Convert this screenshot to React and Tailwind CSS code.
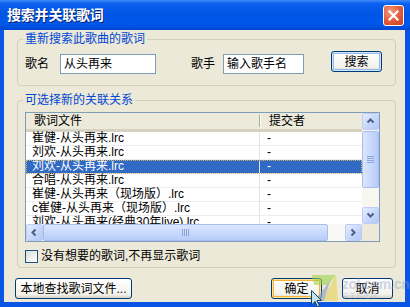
import React from "react";

const rows = [
  "崔健-从头再来.lrc",
  "刘欢-从头再来.lrc",
  "刘欢-从头再来.lrc",
  "合唱-从头再来.lrc",
  "崔健-从头再来（现场版）.lrc",
  "c崔健-从头再来（现场版）.lrc",
  "刘欢-从头再来(经典30年live).lrc",
];

const arrows = {
  up: "M1.5 5.5 L4.5 2.5 L7.5 5.5",
  down: "M1.5 2.5 L4.5 5.5 L7.5 2.5",
  left: "M5.5 1.5 L2.5 4.5 L5.5 7.5",
  right: "M2.5 1.5 L5.5 4.5 L2.5 7.5",
};

function ScrollBtn({ dir }) {
  return (
    <div className="w-[17px] h-[17px] shrink-0 flex items-center justify-center rounded-[2px] border border-[#bccdf5] bg-[linear-gradient(135deg,#e6eefe,#c4d5fb_60%,#b4c8f6)]">
      <svg width="9" height="9" viewBox="0 0 9 9">
        <path d={arrows[dir]} fill="none" stroke="#4d6185" strokeWidth="2" />
      </svg>
    </div>
  );
}

function Grip({ vertical }) {
  return vertical ? (
    <div className="flex flex-col gap-[1px]">
      <div className="w-[7px] h-[1px] bg-[#8ca6dc]" />
      <div className="w-[7px] h-[1px] bg-[#8ca6dc]" />
      <div className="w-[7px] h-[1px] bg-[#8ca6dc]" />
      <div className="w-[7px] h-[1px] bg-[#8ca6dc]" />
    </div>
  ) : (
    <div className="flex gap-[1px]">
      <div className="w-[1px] h-[7px] bg-[#8ca6dc]" />
      <div className="w-[1px] h-[7px] bg-[#8ca6dc]" />
      <div className="w-[1px] h-[7px] bg-[#8ca6dc]" />
      <div className="w-[1px] h-[7px] bg-[#8ca6dc]" />
    </div>
  );
}

function XpButton({ children, ring, className }) {
  return (
    <button
      type="button"
      className={
        "h-[21px] rounded-[3px] border border-[#003c74] bg-[linear-gradient(to_bottom,#ffffff,#f3f2ec_80%,#d8d2c6)] text-[12px] text-black leading-none flex items-center justify-center " +
        (ring === "blue"
          ? "shadow-[inset_0_0_0_1px_#cee7ff,inset_0_0_0_2px_#98b8ea] "
          : ring === "orange"
          ? "shadow-[inset_0_0_0_1px_#ffe49c,inset_0_0_0_2px_#f8b33a] "
          : "") +
        (className || "")
      }
    >
      {children}
    </button>
  );
}

export default function App() {
  return (
    <div className="relative w-[410px] h-[307px] overflow-hidden bg-[#0a55e3] flex flex-col font-['Liberation_Sans','Noto_Sans_CJK_SC',sans-serif] text-[12px] text-black">
      {/* title bar */}
      <div className="h-[30px] shrink-0 flex items-center justify-between pl-[7px] pr-[6px] bg-[linear-gradient(to_bottom,#3d8af7_0%,#0d60ee_12%,#0055e5_45%,#0058ea_80%,#0047d2_100%)]">
        <span className="text-white font-bold text-[14px] leading-none tracking-[-0.2px] [text-shadow:1px_1px_0_#0a1f6b]">
          搜索并关联歌词
        </span>
        <div className="w-[21px] h-[21px] rounded-[3px] border border-white bg-[radial-gradient(circle_at_35%_30%,#f39a7c,#e2583a_55%,#c8401f)] flex items-center justify-center">
          <svg width="11" height="11" viewBox="0 0 11 11">
            <path d="M1.5 1.5 L9.5 9.5 M9.5 1.5 L1.5 9.5" stroke="white" strokeWidth="2.2" strokeLinecap="square" />
          </svg>
        </div>
      </div>

      {/* body */}
      <div className="flex-1 ml-[4px] mr-[5px] mb-[5px] bg-[#ece9d8] pt-[1px] flex flex-col">
        <fieldset className="ml-[13px] w-[379px] border border-[#d0d0bf] rounded-[4px] pb-[11px]">
          <legend className="ml-[5px] px-[2px] text-[#0046d5] text-[12px] leading-[16px]">
            重新搜索此歌曲的歌词
          </legend>
          <div className="flex items-start pl-[7px] pt-[4px]">
            <span className="mt-[3px] leading-[20px]">歌名</span>
            <div className="mt-[3px] ml-[11px] w-[96px] h-[20px] bg-white border border-[#7f9db9] flex items-center pl-[3px]">
              从头再来
            </div>
            <span className="mt-[3px] ml-[35px] leading-[20px]">歌手</span>
            <div className="mt-[3px] ml-[8px] w-[81px] h-[20px] bg-white border border-[#7f9db9] flex items-center pl-[3px]">
              输入歌手名
            </div>
            <XpButton ring="blue" className="ml-[27px] w-[51px]">
              搜索
            </XpButton>
          </div>
        </fieldset>

        <fieldset className="mt-[6px] ml-[13px] w-[379px] border border-[#d0d0bf] rounded-[4px] pb-[4px]">
          <legend className="ml-[5px] px-[2px] text-[#0046d5] text-[12px] leading-[16px]">
            可选择新的关联关系
          </legend>
          {/* list view */}
          <div className="mt-[4px] ml-[7px] w-[355px] h-[130px] border border-[#7f9db9] bg-white grid grid-cols-[336px_17px] grid-rows-[111px_17px]">
            <div className="overflow-hidden">
              <div className="h-[19px] flex items-center bg-[#ebeadb] border-b-[3px] border-[#d6d2c2]">
                <div className="w-[233px] pl-[8px] leading-[16px]">歌词文件</div>
                <div className="w-[2px] h-[12px] border-l border-[#aca899] bg-white" />
                <div className="pl-[8px] leading-[16px]">提交者</div>
              </div>
              {rows.map((r, i) => {
                const sel = i === 2;
                return (
                  <div
                    key={i}
                    className={
                      "h-[14px] flex border-b border-[#ededed] whitespace-nowrap leading-[13px] " +
                      (sel
                        ? "bg-[#316ac5] text-white outline outline-1 outline-dotted outline-[#c9b56f] -outline-offset-1"
                        : "")
                    }
                  >
                    <div className="w-[234px] pl-[6px] border-r border-[#e4e4e4]">{r}</div>
                    <div className="pl-[7px]">-</div>
                  </div>
                );
              })}
            </div>
            {/* vertical scrollbar */}
            <div className="flex flex-col bg-[#f7f6f0]">
              <ScrollBtn dir="up" />
              <div className="mt-[1px] h-[57px] rounded-[2px] border border-[#a7bdf0] bg-[linear-gradient(to_right,#dbe6fe,#c6d7fc_60%,#b7cbf8)] flex items-center justify-center">
                <Grip vertical />
              </div>
              <div className="flex-1" />
              <ScrollBtn dir="down" />
            </div>
            {/* horizontal scrollbar */}
            <div className="flex bg-[#f9f8f4]">
              <ScrollBtn dir="left" />
              <div className="w-[285px] rounded-[2px] border border-[#a7bdf0] bg-[linear-gradient(to_bottom,#dbe6fe,#c6d7fc_60%,#b7cbf8)] flex items-center justify-center">
                <Grip />
              </div>
              <div className="flex-1" />
              <ScrollBtn dir="right" />
            </div>
            <div className="bg-[#ece9d8]" />
          </div>
          <div className="mt-[7px] ml-[7px] flex items-center gap-[3px]">
            <div className="w-[13px] h-[13px] border border-[#1c5180] bg-[linear-gradient(135deg,#dcdcd7,#ffffff)]" />
            <span className="leading-[14px]">没有想要的歌词,不再显示歌词</span>
          </div>
        </fieldset>

        <div className="mt-[10px] flex pl-[11px] pr-[12px]">
          <XpButton className="w-[117px] px-[4px]">本地查找歌词文件...</XpButton>
          <XpButton ring="orange" className="ml-auto w-[51px]">
            确定
          </XpButton>
          <XpButton className="ml-[20px] w-[51px]">取消</XpButton>
        </div>
      </div>

      {/* watermark */}
      <div className="absolute left-[310px] top-[273px] opacity-60 pointer-events-none">
        <svg width="30" height="30" viewBox="0 0 30 30">
          <polygon points="2,2 26,2 18,12 4,12" fill="#9fd24a" />
          <polygon points="26,2 28,28 12,28" fill="#e6d35a" />
          <polygon points="4,28 20,8 14,28" fill="#8a9bc2" />
        </svg>
      </div>
      <div className="absolute left-[342px] top-[277px] opacity-40 pointer-events-none flex flex-col items-start">
        <span className="text-[14px] font-bold leading-[14px] text-[#8d9fc3] tracking-[-0.5px]">
          zol.com.cn
        </span>
        <span className="text-[7px] leading-[8px] text-[#8d9fc3] mt-[1px]">中关村在线</span>
      </div>
      {/* cursor */}
      <svg className="absolute left-[311px] top-[290px]" width="12" height="18" viewBox="0 0 12 18">
        <path d="M0.5 0.5 L0.5 15 L4 11.5 L6.5 17 L8.5 16 L6 10.5 L10.5 10.5 Z" fill="#bfe4ea" stroke="#1b3f66" strokeWidth="1" />
      </svg>
    </div>
  );
}
